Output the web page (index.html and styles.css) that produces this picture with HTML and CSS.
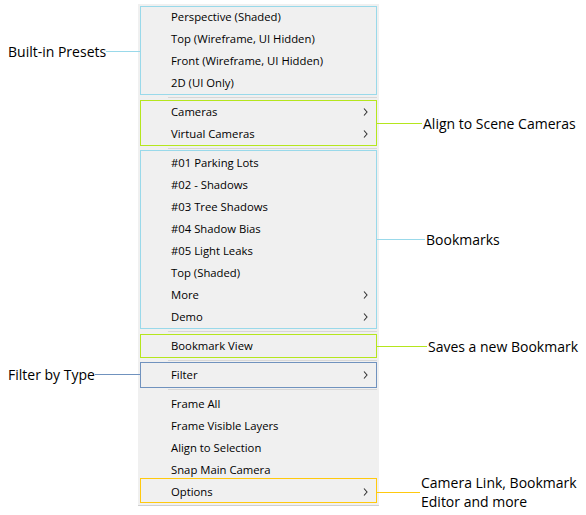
FILE: index.html
```html
<!DOCTYPE html>
<html lang="en">
<head>
<meta charset="utf-8">
<title>View menu</title>
<link rel="stylesheet" href="styles.css">
</head>
<body>
<div class="canvas">
  <div class="menu-pad menu-pad-top"></div>

  <div class="callout callout-left tone-cyan shift-down"><span class="note">Built-in Presets</span><span class="lead"></span></div>
  <div class="group boxed tone-cyan box-presets">
    <div class="item"><span class="label">Perspective (Shaded)</span></div>
    <div class="item"><span class="label">Top (Wireframe, UI Hidden)</span></div>
    <div class="item"><span class="label">Front (Wireframe, UI Hidden)</span></div>
    <div class="item"><span class="label">2D (UI Only)</span></div>
  </div>

  <div class="sep"><span class="sep-line"></span></div>

  <div class="group boxed tone-lime box-cameras">
    <div class="item"><span class="label">Cameras</span><svg class="chev" viewBox="0 0 5 8" width="5" height="8"><path d="M1 0.5 L4 4 L1 7.5"/></svg></div>
    <div class="item"><span class="label">Virtual Cameras</span><svg class="chev" viewBox="0 0 5 8" width="5" height="8"><path d="M1 0.5 L4 4 L1 7.5"/></svg></div>
  </div>
  <div class="callout callout-right tone-lime lead-align"><span class="lead"></span><span class="note">Align to Scene Cameras</span></div>

  <div class="sep"><span class="sep-line"></span></div>

  <div class="group boxed tone-cyan box-bookmarks">
    <div class="item"><span class="label">#01 Parking Lots</span></div>
    <div class="item"><span class="label">#02 - Shadows</span></div>
    <div class="item"><span class="label">#03 Tree Shadows</span></div>
    <div class="item"><span class="label">#04 Shadow Bias</span></div>
    <div class="item"><span class="label">#05 Light Leaks</span></div>
    <div class="item"><span class="label">Top (Shaded)</span></div>
    <div class="item"><span class="label">More</span><svg class="chev" viewBox="0 0 5 8" width="5" height="8"><path d="M1 0.5 L4 4 L1 7.5"/></svg></div>
    <div class="item"><span class="label">Demo</span><svg class="chev" viewBox="0 0 5 8" width="5" height="8"><path d="M1 0.5 L4 4 L1 7.5"/></svg></div>
  </div>
  <div class="callout callout-right tone-cyan lead-bookmarks shift-up"><span class="lead"></span><span class="note">Bookmarks</span></div>

  <div class="sep"><span class="sep-line"></span></div>

  <div class="group boxed tone-lime box-save">
    <div class="item"><span class="label">Bookmark View</span></div>
  </div>
  <div class="callout callout-right tone-lime lead-save"><span class="lead"></span><span class="note">Saves a new Bookmark</span></div>

  <div class="sep"><span class="sep-line"></span></div>

  <div class="callout callout-left tone-blue shift-up"><span class="note">Filter by Type</span><span class="lead"></span></div>
  <div class="group boxed tone-blue box-filter">
    <div class="item"><span class="label">Filter</span><svg class="chev" viewBox="0 0 5 8" width="5" height="8"><path d="M1 0.5 L4 4 L1 7.5"/></svg></div>
  </div>

  <div class="sep"><span class="sep-line"></span></div>

  <div class="group">
    <div class="item"><span class="label">Frame All</span></div>
    <div class="item"><span class="label">Frame Visible Layers</span></div>
    <div class="item"><span class="label">Align to Selection</span></div>
    <div class="item"><span class="label">Snap Main Camera</span></div>
  </div>
  <div class="group boxed tone-gold box-options">
    <div class="item"><span class="label">Options</span><svg class="chev" viewBox="0 0 5 8" width="5" height="8"><path d="M1 0.5 L4 4 L1 7.5"/></svg></div>
  </div>
  <div class="callout callout-right tone-gold lead-options"><span class="lead"></span><span class="note">Camera Link, Bookmark<br>Editor and more</span></div>

  <div class="menu-pad menu-pad-bottom"></div>
</div>
</body>
</html>
```

FILE: styles.css
```css
html, body {
  margin: 0;
  padding: 0;
  background: #ffffff;
}

.canvas {
  display: grid;
  grid-template-columns: 138px 241px 1fr;
  padding-top: 4px;
  padding-bottom: 9px;
  font-family: "Open Sans", "Noto Sans", sans-serif;
  color: #000;
}

.tone-cyan { --c: #99d9ea; }
.tone-lime { --c: #b5e61d; }
.tone-blue { --c: #7092be; }
.tone-gold { --c: #ffc90e; }

/* menu column */
.menu-pad,
.group,
.sep {
  grid-column: 2;
  background: #f0f0f0;
}

.menu-pad-top { height: 2px; }
.menu-pad-bottom {
  height: 2px;
  border-bottom: 1px solid #cfcfcf;
}

.group {
  position: relative;
  display: flex;
  flex-direction: column;
}

.boxed::after {
  content: "";
  position: absolute;
  left: 2px;
  right: 2px;
  top: 0;
  bottom: 0;
  border: 1px solid var(--c);
  pointer-events: none;
}

.box-presets::after { top: 0; bottom: -1px; }
.box-cameras::after { top: -1px; bottom: -1px; }
.box-bookmarks::after { top: -2px; bottom: -1px; }
.box-save::after { top: -1px; bottom: -1px; }
.box-filter::after { top: -2px; bottom: -2px; }
.box-options::after { top: -3px; bottom: 0; }

.item {
  box-sizing: border-box;
  height: 22px;
  display: flex;
  align-items: center;
  padding-left: 33px;
  padding-right: 11px;
  padding-bottom: 2px;
  font-size: 11.3px;
  white-space: nowrap;
}

.item .label {
  flex: 1;
}

.chev {
  display: block;
  fill: none;
  stroke: #333;
  stroke-width: 1.1;
  margin-top: 1px;
}

.sep {
  padding: 3px 2px 3px 30px;
}

.sep-line {
  display: block;
  height: 1px;
  background: #d7d7d7;
}

/* callouts */
.callout {
  align-self: center;
  height: 0;
  display: flex;
  align-items: center;
  position: relative;
  z-index: 1;
  font-size: 14px;
  line-height: 19px;
  white-space: nowrap;
}

.callout .lead {
  height: 1px;
  background: var(--c);
  flex: none;
}

.callout-left {
  grid-column: 1;
  padding-left: 8px;
  margin-right: -2px;
}

.callout-left .lead {
  flex: 1;
}

.callout-right {
  grid-column: 3;
  margin-left: -2px;
}

.callout-right .lead { margin-right: 1px; }
.lead-align .lead { width: 45px; }
.lead-bookmarks .lead { width: 48px; }
.lead-save .lead { width: 50px; }
.lead-options .lead { width: 43px; }

.shift-down { margin-top: 2px; }
.shift-up { margin-top: -2px; }
```
